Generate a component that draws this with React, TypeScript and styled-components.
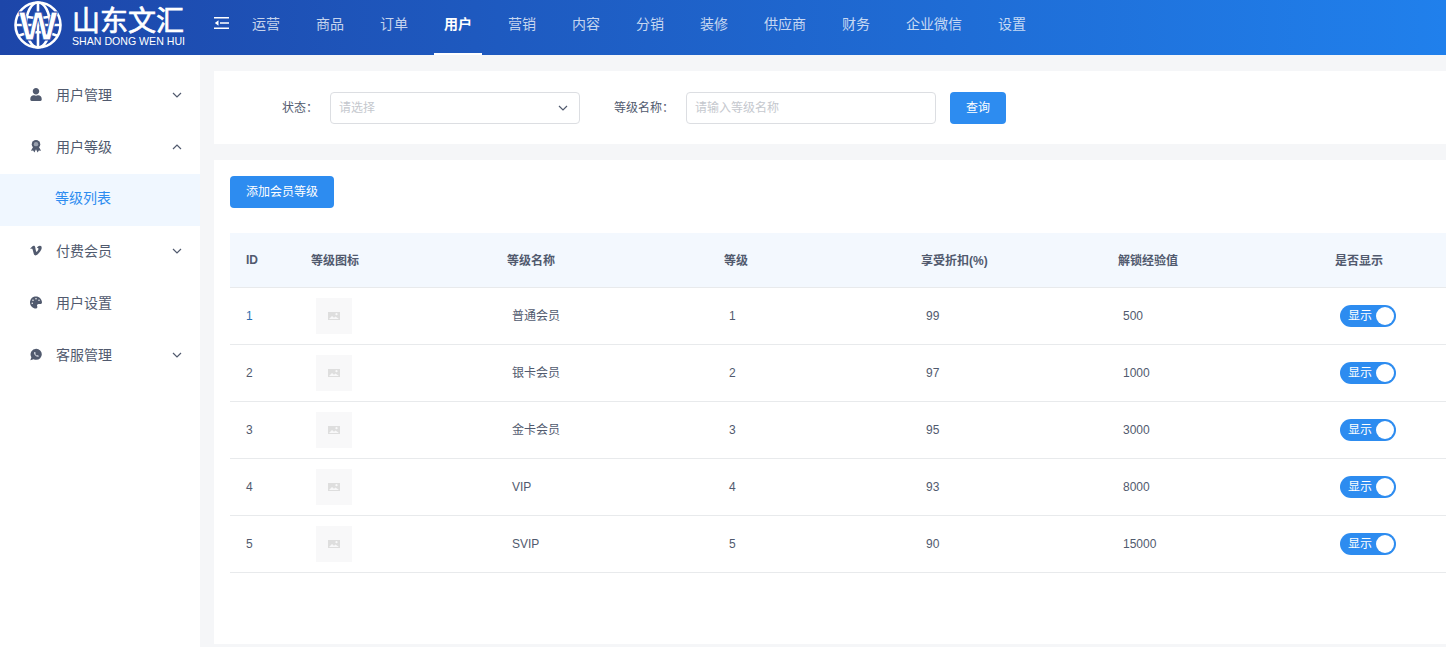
import React from "react";
import styled, { createGlobalStyle } from "styled-components";
import { FaPalette, FaUser, FaVimeoV } from "react-icons/fa";

const navItems = ["运营", "商品", "订单", "用户", "营销", "内容", "分销", "装修", "供应商", "财务", "企业微信", "设置"];
const levels = [
  { id: 1, name: "普通会员", discount: 99, exp: 500 },
  { id: 2, name: "银卡会员", discount: 97, exp: 1000 },
  { id: 3, name: "金卡会员", discount: 95, exp: 3000 },
  { id: 4, name: "VIP", discount: 93, exp: 8000 },
  { id: 5, name: "SVIP", discount: 90, exp: 15000 },
];
const columnWidths = [65, 196, 217, 197, 197, 217, 127];

function Chevron({ up }: { up?: boolean }) {
  return (
    <ChevronIcon viewBox="0 0 10 6" $up={up}>
      <path d="M1 1l4 4 4-4" fill="none" stroke="currentColor" strokeWidth="1.2" />
    </ChevronIcon>
  );
}

function RibbonIcon() {
  return (
    <svg width="13" height="14" viewBox="0 0 13 14">
      <path d="M3.600 7.500L1 12.200l2.400-.3L4.800 14l1.700-3.500L8.200 14l1.400-2.100 2.400.3-2.600-4.700z" fill="#515a6e" />
      <circle cx="6.500" cy="5" r="4.600" fill="#515a6e" />
      <circle cx="6.500" cy="5" r="2.400" fill="#9aa1ae" />
    </svg>
  );
}

function ChatIcon() {
  return (
    <svg width="13" height="13" viewBox="0 0 13 13">
      <path d="M6.800.300a6 6 0 0 1 0 12 6 6 0 0 1-2.900-.7L.4 12.700l1.100-3.300A6 6 0 0 1 6.800.300z" fill="#515a6e" />
      <path d="M4.700 3.800c-.6.500-.6 1.500.1 2.600.8 1.300 2 2.300 3.300 2.600.8.100 1.400-.3 1.600-1l-1.500-.9-.7.600C6.600 7.300 6 6.600 5.700 5.800l.6-.6-.7-1.500z" fill="#c9ced8" />
    </svg>
  );
}

function Logo() {
  return (
    <LogoWrap>
      <svg width="50" height="50" viewBox="0 0 50 50">
        <g fill="none" stroke="#fff" strokeWidth="2.600">
          <circle cx="25" cy="25" r="22.500" />
          <ellipse cx="25" cy="25" rx="12" ry="22.500" />
          <path d="M25 3v44M5 14q20 8 40 0M5 36q20-8 40 0M2.500 25h45" />
        </g>
        <text x="25" y="40" textAnchor="middle" fontFamily="Liberation Sans, sans-serif" fontWeight="700" fontSize="41" fill="#fff" stroke="#1d47ab" strokeWidth="0.8">
          W
        </text>
      </svg>
      <LogoText>
        <LogoName>山东文汇</LogoName>
        <LogoSub>SHAN DONG WEN HUI</LogoSub>
      </LogoText>
    </LogoWrap>
  );
}

function MenuToggle() {
  return (
    <ToggleIcon viewBox="0 0 15 14">
      <path d="M0 1h15v1.600H0zM0 11.400h15V13H0zM6 6.200h9v1.600H6zM4.500 4.200v5.600L0.800 7z" fill="#fff" />
    </ToggleIcon>
  );
}

function ImageSlot() {
  return (
    <Thumb>
      <svg width="12" height="8" viewBox="0 0 12 8">
        <path d="M0 0h12v8H0z" fill="#dedede" />
        <path d="M1 7l3-3 2 1.700L7.500 4.500 11 7z" fill="#f8f8f9" />
        <circle cx="8.500" cy="2.200" r="1.100" fill="#f8f8f9" />
      </svg>
    </Thumb>
  );
}

export default function App() {
  return (
    <>
      <GlobalStyle />
      <Header>
        <Logo />
        <MenuToggle />
        <Nav>
          {navItems.map((item) => (
            <NavItem key={item} $active={item === "用户"}>
              {item}
            </NavItem>
          ))}
        </Nav>
      </Header>
      <Body>
        <Sidebar>
          <MenuItem>
            <MenuIcon><FaUser /></MenuIcon>
            <MenuLabel>用户管理</MenuLabel>
            <Chevron />
          </MenuItem>
          <MenuItem>
            <MenuIcon><RibbonIcon /></MenuIcon>
            <MenuLabel>用户等级</MenuLabel>
            <Chevron up />
          </MenuItem>
          <SubItem>等级列表</SubItem>
          <MenuItem>
            <MenuIcon><FaVimeoV /></MenuIcon>
            <MenuLabel>付费会员</MenuLabel>
            <Chevron />
          </MenuItem>
          <MenuItem>
            <MenuIcon><FaPalette /></MenuIcon>
            <MenuLabel>用户设置</MenuLabel>
          </MenuItem>
          <MenuItem>
            <MenuIcon><ChatIcon /></MenuIcon>
            <MenuLabel>客服管理</MenuLabel>
            <Chevron />
          </MenuItem>
        </Sidebar>
        <Main>
          <FilterCard>
            <FormLabel>状态：</FormLabel>
            <Field>
              <Placeholder>请选择</Placeholder>
              <Chevron />
            </Field>
            <FormLabel>等级名称：</FormLabel>
            <Field>
              <Placeholder>请输入等级名称</Placeholder>
            </Field>
            <PrimaryButton>查询</PrimaryButton>
          </FilterCard>
          <TableCard>
            <PrimaryButton>添加会员等级</PrimaryButton>
            <Table>
              <colgroup>
                {columnWidths.map((w, i) => (
                  <col key={i} width={w} />
                ))}
              </colgroup>
              <thead>
                <tr>
                  <Th>ID</Th>
                  <Th>等级图标</Th>
                  <Th>等级名称</Th>
                  <Th>等级</Th>
                  <Th>享受折扣(%)</Th>
                  <Th>解锁经验值</Th>
                  <Th>是否显示</Th>
                </tr>
              </thead>
              <tbody>
                {levels.map((level) => (
                  <tr key={level.id}>
                    <IdCell $link={level.id === 1}>{level.id}</IdCell>
                    <Td><ImageSlot /></Td>
                    <NameCell $cjk={level.id < 4}>{level.name}</NameCell>
                    <Td>{level.id}</Td>
                    <Td>{level.discount}</Td>
                    <Td>{level.exp}</Td>
                    <Td>
                      <Switch>
                        显示
                        <Knob />
                      </Switch>
                    </Td>
                  </tr>
                ))}
              </tbody>
            </Table>
          </TableCard>
        </Main>
      </Body>
    </>
  );
}

const GlobalStyle = createGlobalStyle`
  * {
    box-sizing: border-box;
  }
  html, body {
    margin: 0;
    height: 100%;
    overflow: hidden;
    background: #f5f6f8;
    font-family: "Liberation Sans", "Noto Sans CJK SC", sans-serif;
    color: #515a6e;
  }
`;
const Header = styled.header`
  height: 55px;
  display: flex;
  align-items: center;
  background: linear-gradient(90deg, #1d46a9 0%, #2080ec 100%);
  color: #fff;
`;
const LogoWrap = styled.div`
  width: 214px;
  height: 55px;
  padding: 0 0 5px 13px;
  display: flex;
  align-items: center;
  flex-shrink: 0;
`;
const LogoText = styled.div`
  margin: 3px 0 0 9px;
  display: flex;
  flex-direction: column;
`;
const LogoName = styled.div`
  font-size: 28px;
  line-height: 29px;
  font-weight: 400;
  white-space: nowrap;
  -webkit-text-stroke: 0.7px #fff;
`;
const LogoSub = styled.div`
  font-size: 10.6px;
  line-height: 11px;
  white-space: nowrap;
`;
const ToggleIcon = styled.svg`
  width: 15px;
  height: 14px;
  margin-bottom: 9px;
  flex-shrink: 0;
`;
const Nav = styled.nav`
  height: 55px;
  margin-left: 13px;
  display: flex;
  gap: 16px;
`;
const NavItem = styled.div<{ $active?: boolean }>`
  padding: 0 10px;
  height: 55px;
  line-height: 49px;
  font-size: 14px;
  white-space: nowrap;
  color: ${(p) => (p.$active ? "#fff" : "rgba(255, 255, 255, 0.75)")};
  font-weight: ${(p) => (p.$active ? 700 : 400)};
  border-bottom: 2px solid ${(p) => (p.$active ? "#fff" : "transparent")};
`;
const Body = styled.div`
  height: 592px;
  display: flex;
`;
const Sidebar = styled.aside`
  width: 200px;
  flex-shrink: 0;
  padding-top: 15px;
  background: #fff;
`;
const MenuItem = styled.div`
  height: 52px;
  padding: 0 18px 4px 30px;
  display: flex;
  align-items: center;
  color: #515a6e;
`;
const MenuIcon = styled.span`
  width: 12px;
  margin-right: 14px;
  display: flex;
  justify-content: center;
  font-size: 13px;
`;
const MenuLabel = styled.span`
  flex: 1;
  font-size: 14px;
`;
const ChevronIcon = styled.svg<{ $up?: boolean }>`
  width: 10px;
  height: 6px;
  margin-top: 2px;
  color: #515a6e;
  transform: ${(p) => (p.$up ? "rotate(180deg)" : "none")};
`;
const SubItem = styled.div`
  height: 52px;
  line-height: 48px;
  padding-left: 55px;
  font-size: 14px;
  color: #2d8cf0;
  background: #f0f7ff;
`;
const Main = styled.main`
  flex: 1;
  min-width: 0;
  padding: 16px 0 3px 14px;
  display: flex;
  flex-direction: column;
  gap: 16px;
`;
const FilterCard = styled.section`
  height: 73px;
  padding: 21px 0 0 24px;
  display: flex;
  align-items: flex-start;
  background: #fff;
`;
const FormLabel = styled.label`
  width: 92px;
  padding-right: 12px;
  flex-shrink: 0;
  text-align: right;
  font-size: 12px;
  line-height: 32px;
`;
const Field = styled.div`
  width: 250px;
  height: 32px;
  margin-right: 14px;
  padding: 0 11px 3px 8px;
  display: flex;
  align-items: center;
  justify-content: space-between;
  border: 1px solid #dcdee2;
  border-radius: 4px;
  background: #fff;
`;
const Placeholder = styled.span`
  font-size: 12px;
  color: #c5c8ce;
`;
const PrimaryButton = styled.button`
  height: 32px;
  padding: 0 16px 3px;
  border: none;
  border-radius: 4px;
  background: #2d8cf0;
  color: #fff;
  font-family: inherit;
  font-size: 12px;
`;
const TableCard = styled.section`
  flex: 1;
  padding: 16px 0 0 16px;
  background: #fff;
`;
const Table = styled.table`
  width: 1216px;
  margin-top: 25px;
  table-layout: fixed;
  border-collapse: collapse;
`;
const Th = styled.th`
  height: 54px;
  padding: 0 16px;
  text-align: left;
  font-size: 12px;
  font-weight: 700;
  color: #515a6e;
  background: #f3f8fe;
  border-bottom: 1px solid #e8eaec;
  white-space: nowrap;
`;
const Td = styled.td`
  height: 57px;
  padding: 0 21px;
  font-size: 12px;
  color: #515a6e;
  border-bottom: 1px solid #e8eaec;
`;
const NameCell = styled(Td)<{ $cjk?: boolean }>`
  padding-bottom: ${(p) => (p.$cjk ? "2px" : "0")};
`;
const IdCell = styled(Td)<{ $link?: boolean }>`
  padding: 0 16px;
  color: ${(p) => (p.$link ? "#2d6fb0" : "#515a6e")};
`;
const Thumb = styled.div`
  width: 36px;
  height: 36px;
  display: flex;
  align-items: center;
  justify-content: center;
  background: #f8f8f9;
`;
const Switch = styled.div`
  width: 56px;
  height: 22px;
  padding-left: 8px;
  position: relative;
  border-radius: 11px;
  background: #2d8cf0;
  color: #fff;
  font-size: 12px;
  line-height: 22px;
`;
const Knob = styled.span`
  width: 18px;
  height: 18px;
  position: absolute;
  top: 2px;
  right: 2px;
  border-radius: 50%;
  background: #fff;
`;
